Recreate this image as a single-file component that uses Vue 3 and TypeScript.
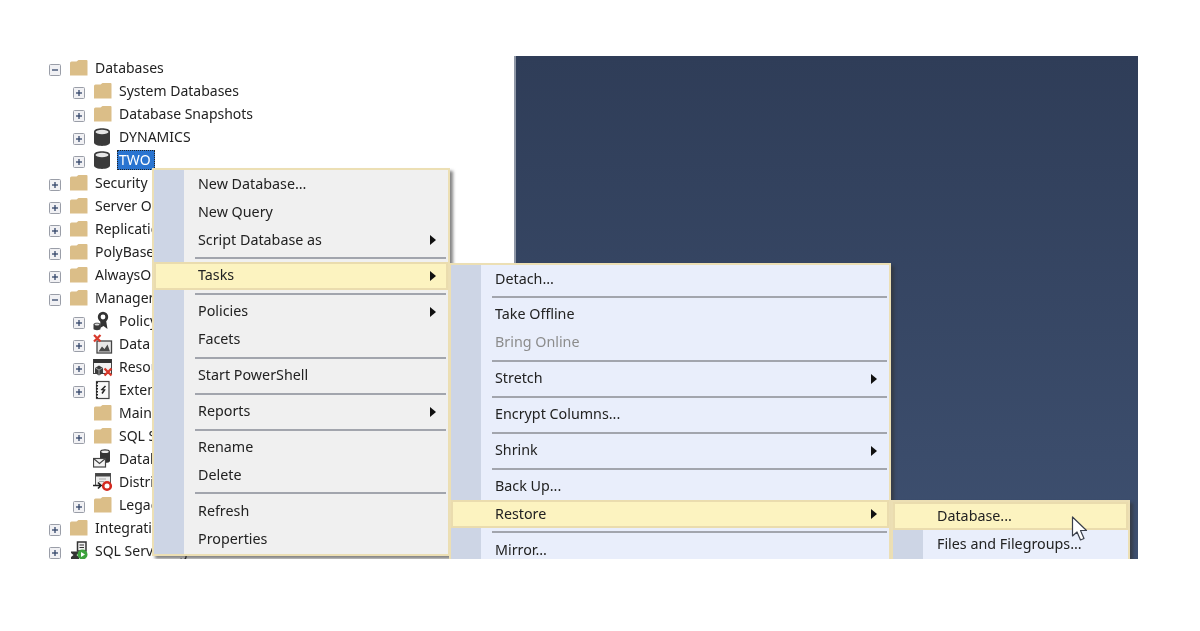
<script setup lang="ts">
type Row = { label: string; level: number; exp?: 'plus' | 'minus'; icon: string; selected?: boolean };
type Item = { label?: string; sep?: boolean; arrow?: boolean; active?: boolean; disabled?: boolean };

const rows: Row[] = [
  { label: 'Databases', level: 0, exp: 'minus', icon: 'folder' },
  { label: 'System Databases', level: 1, exp: 'plus', icon: 'folder' },
  { label: 'Database Snapshots', level: 1, exp: 'plus', icon: 'folder' },
  { label: 'DYNAMICS', level: 1, exp: 'plus', icon: 'db' },
  { label: 'TWO', level: 1, exp: 'plus', icon: 'db', selected: true },
  { label: 'Security', level: 0, exp: 'plus', icon: 'folder' },
  { label: 'Server Objects', level: 0, exp: 'plus', icon: 'folder' },
  { label: 'Replication', level: 0, exp: 'plus', icon: 'folder' },
  { label: 'PolyBase', level: 0, exp: 'plus', icon: 'folder' },
  { label: 'AlwaysOn High Availability', level: 0, exp: 'plus', icon: 'folder' },
  { label: 'Management', level: 0, exp: 'minus', icon: 'folder' },
  { label: 'Policy Management', level: 1, exp: 'plus', icon: 'policy' },
  { label: 'Data Collection', level: 1, exp: 'plus', icon: 'data' },
  { label: 'Resource Governor', level: 1, exp: 'plus', icon: 'resource' },
  { label: 'Extended Events', level: 1, exp: 'plus', icon: 'extended' },
  { label: 'Maintenance Plans', level: 1, icon: 'folder' },
  { label: 'SQL Server Logs', level: 1, exp: 'plus', icon: 'folder' },
  { label: 'Database Mail', level: 1, icon: 'mail' },
  { label: 'Distributed Transaction', level: 1, icon: 'dtc' },
  { label: 'Legacy', level: 1, exp: 'plus', icon: 'folder' },
  { label: 'Integration Services', level: 0, exp: 'plus', icon: 'folder' },
  { label: 'SQL Server Agent', level: 0, exp: 'plus', icon: 'agent' },
];

const main: Item[] = [
  { label: 'New Database...' },
  { label: 'New Query' },
  { label: 'Script Database as', arrow: true },
  { sep: true },
  { label: 'Tasks', arrow: true, active: true },
  { sep: true },
  { label: 'Policies', arrow: true },
  { label: 'Facets' },
  { sep: true },
  { label: 'Start PowerShell' },
  { sep: true },
  { label: 'Reports', arrow: true },
  { sep: true },
  { label: 'Rename' },
  { label: 'Delete' },
  { sep: true },
  { label: 'Refresh' },
  { label: 'Properties' },
];

const tasks: Item[] = [
  { label: 'Detach...' },
  { sep: true },
  { label: 'Take Offline' },
  { label: 'Bring Online', disabled: true },
  { sep: true },
  { label: 'Stretch', arrow: true },
  { sep: true },
  { label: 'Encrypt Columns...' },
  { sep: true },
  { label: 'Shrink', arrow: true },
  { sep: true },
  { label: 'Back Up...' },
  { label: 'Restore', arrow: true, active: true },
  { sep: true },
  { label: 'Mirror...' },
];

const restore: Item[] = [
  { label: 'Database...', active: true },
  { label: 'Files and Filegroups...' },
];

const menus = [
  { id: 'main', items: main },
  { id: 'tasks', items: tasks },
  { id: 'restore', items: restore },
];
</script>

<template>
  <div class="page">
    <div class="stage">
      <ul class="tree">
        <li v-for="r in rows" :key="r.label" class="row" :class="'lvl' + r.level">
          <span class="exp">
            <svg v-if="r.exp" width="12" height="12" viewBox="0 0 12 12">
              <rect x=".5" y=".5" width="11" height="11" rx="1" fill="#f1f1f4" stroke="#9a9ea8" />
              <path d="M3 6h6" stroke="#34466a" stroke-width="1.3" />
              <path v-if="r.exp === 'plus'" d="M6 3v6" stroke="#34466a" stroke-width="1.3" />
            </svg>
          </span>
          <svg class="ico" width="20" height="20" viewBox="0 0 20 20">
            <path v-if="r.icon === 'folder'" d="M1 5q0-1.500 1.500-1.500h5l2-1.500h8q1 0 1 1v14.500h-17.500z" fill="#dbbe88" />
            <g v-else-if="r.icon === 'db'">
              <path d="M1 4.500c0-4.500 16-4.500 16 0v11c0 4.500-16 4.500-16 0z" fill="#3a3a3a" />
              <ellipse cx="9" cy="5" rx="6.500" ry="2.200" fill="#e6e6e6" />
            </g>
            <g v-else-if="r.icon === 'policy'">
              <path d="M7.500 8l-.5 9 3.500-2 4 3-1.500-9z" fill="#333" />
              <circle cx="10" cy="6" r="3.800" fill="#fff" stroke="#333" stroke-width="2.800" />
              <path d="M.5 13.500c0-2.500 7-2.500 7 0v4.500c0 1.500-7 1.500-7 0z" fill="#3a3a3a" />
              <ellipse cx="4" cy="13.500" rx="2.500" ry="1" fill="#ddd" />
            </g>
            <g v-else-if="r.icon === 'data'">
              <rect x="4" y="7" width="14.500" height="12" fill="#e8e8e8" stroke="#444" stroke-width="1.300" />
              <path d="M5.500 17.500l3.500-5 2.500 2.500 3-4.500 2.500 7z" fill="#4a4a4a" />
              <path d="M1 1l6.500 6.500M7.500 1l-6.500 6.500" stroke="#d8392b" stroke-width="2.200" />
            </g>
            <g v-else-if="r.icon === 'resource'">
              <rect x=".5" y="2.500" width="18" height="14" fill="#f2f2f2" stroke="#444" />
              <rect x=".5" y="2" width="18" height="4" fill="#333" />
              <path d="M2 11l4-2.500 4 2.500v5l-4 2.500-4-2.500z" fill="#3c3c3c" />
              <path d="M6 13v5M2.500 11l3.500 2 3.500-2" fill="none" stroke="#bbb" stroke-width=".8" />
              <path d="M11.500 11.500l7 7M18.500 11.500l-7 7" stroke="#d8392b" stroke-width="2.300" />
            </g>
            <g v-else-if="r.icon === 'extended'">
              <rect x="3.500" y="1.500" width="12.500" height="17" fill="#f8f8f8" stroke="#444" stroke-width="1.200" />
              <path d="M4 2v16" stroke="#222" stroke-width="2" stroke-dasharray="1.500 1.500" />
              <path d="M12.500 6l-3.500 3.500 2.500.5-2.500 3.500" fill="none" stroke="#222" stroke-width="1.500" />
            </g>
            <g v-else-if="r.icon === 'mail'">
              <path d="M7 2.500c0-3 10-3 10 0v9.500c0 2.500-10 2.500-10 0z" fill="#333" />
              <ellipse cx="12" cy="2.800" rx="3.800" ry="1.300" fill="#e8e8e8" />
              <rect x=".5" y="9.500" width="12" height="8.500" fill="#f4f4f4" stroke="#444" stroke-width="1.200" />
              <path d="M.5 9.500l6 5 6-5" fill="none" stroke="#444" stroke-width="1.200" />
            </g>
            <g v-else-if="r.icon === 'dtc'">
              <rect x="2.500" y="1.500" width="15" height="12" fill="#ececec" stroke="#555" />
              <rect x="2.500" y="1.500" width="15" height="3" fill="#444" />
              <path d="M6 7h7M6 9.500h5" stroke="#aaa" />
              <path d="M0 13.500h7M5 10.500l3 3-3 3" fill="none" stroke="#222" stroke-width="1.700" />
              <circle cx="14" cy="14" r="3.800" fill="#fff" stroke="#d42a20" stroke-width="2.600" />
            </g>
            <g v-else-if="r.icon === 'agent'">
              <rect x="8.500" y="1" width="8.500" height="9" fill="#f0f0f0" stroke="#333" stroke-width="1.500" />
              <path d="M10.500 4h4.500M10.500 6.500h4.500" stroke="#333" />
              <path d="M2 10.500h8v1.500l-2.500 2 2.500 2v2h-8v-2l2.500-2-2.500-2z" fill="#333" />
              <circle cx="13.500" cy="13.500" r="5" fill="#3da23d" />
              <path d="M12 11l4 2.500-4 2.500z" fill="#fff" />
            </g>
          </svg>
          <span class="label" :class="{ sel: r.selected }">{{ r.label }}</span>
        </li>
      </ul>
      <div class="panel"></div>

      <div v-for="m in menus" :key="m.id" class="menu" :class="m.id">
        <template v-for="(it, i) in m.items" :key="i">
          <div v-if="it.sep" class="sep"></div>
          <div v-else class="item" :class="{ active: it.active, disabled: it.disabled }">
            <span class="text">{{ it.label }}</span>
            <span v-if="it.arrow" class="arrow"></span>
          </div>
        </template>
      </div>

      <svg class="cursor" width="18" height="27" viewBox="0 0 18 27">
        <path d="M1.500 1v19l4.500-4 3.500 8 3.500-1.500-3.500-8h6z" fill="#fff" stroke="#3a3f4a" stroke-width="1.200" stroke-linejoin="round" />
      </svg>
    </div>
  </div>
</template>

<style>
html, body { background: #fff; }
</style>

<style scoped>
.page {
  width: 1200px;
  height: 631px;
  background: #fff;
  padding: 56px 62px 72px 48px;
  box-sizing: border-box;
  font-family: "Noto Sans", "Open Sans", sans-serif;
  font-size: 14.3px;
  color: #222;
  filter: blur(0.55px);
}
.stage {
  position: relative;
  height: 503px;
  display: flex;
  overflow: hidden;
}
.tree {
  list-style: none;
  margin: 0;
  padding: 0;
  width: 466px;
  flex: none;
  font-size: 14px;
}
.row {
  height: 23px;
  display: flex;
  align-items: center;
  white-space: nowrap;
}
.lvl1 { padding-left: 24px; }
.exp { display: flex; width: 12px; height: 12px; flex: none; margin: 5px 8px 0 1px; }
.ico { flex: none; margin-right: 4px; }
.label { padding: 0 2px; line-height: 20px; }
.label.sel {
  background: #2a74d0;
  color: #fff;
  padding-right: 4px;
  outline: 1px dotted #222;
  outline-offset: -1px;
}
.panel {
  flex: 1;
  background: linear-gradient(#2f3d58, #3e5070);
  border-left: 2px solid #8f97a6;
}
.menu {
  position: absolute;
  box-sizing: border-box;
  border: 2px solid #ecdfb4;
  padding: 0 0 1px;
  box-shadow: 3px 3px 3px rgba(50, 50, 50, .6);
}
.main {
  left: 104px;
  top: 112px;
  width: 298px;
  background: linear-gradient(90deg, #cdd5e5 30px, #f0f0f0 30px);
}
.tasks {
  left: 401px;
  top: 207px;
  width: 442px;
  background: linear-gradient(90deg, #cdd5e5 30px, #e9eefb 30px);
}
.restore {
  left: 843px;
  top: 444px;
  width: 239px;
  background: linear-gradient(90deg, #cdd5e5 30px, #e9eefb 30px);
}
.item {
  height: 28px;
  display: flex;
  align-items: center;
  justify-content: space-between;
  padding: 0 12px 0 44px;
  box-sizing: border-box;
  white-space: nowrap;
}
.text { margin-bottom: 2px; }
.item.active {
  background: #fcf3c0;
  border: 2px solid #eadcae;
  padding: 0 10px 0 42px;
}
.item.disabled { color: #8c8c8c; }
.sep {
  height: 2px;
  margin: 3px 2px 2.9px 41px;
  background: #a2a5ad;
}
.arrow {
  border-left: 6px solid #111;
  border-top: 5px solid transparent;
  border-bottom: 5px solid transparent;
}
.cursor {
  position: absolute;
  left: 1023px;
  top: 460px;
}
</style>
